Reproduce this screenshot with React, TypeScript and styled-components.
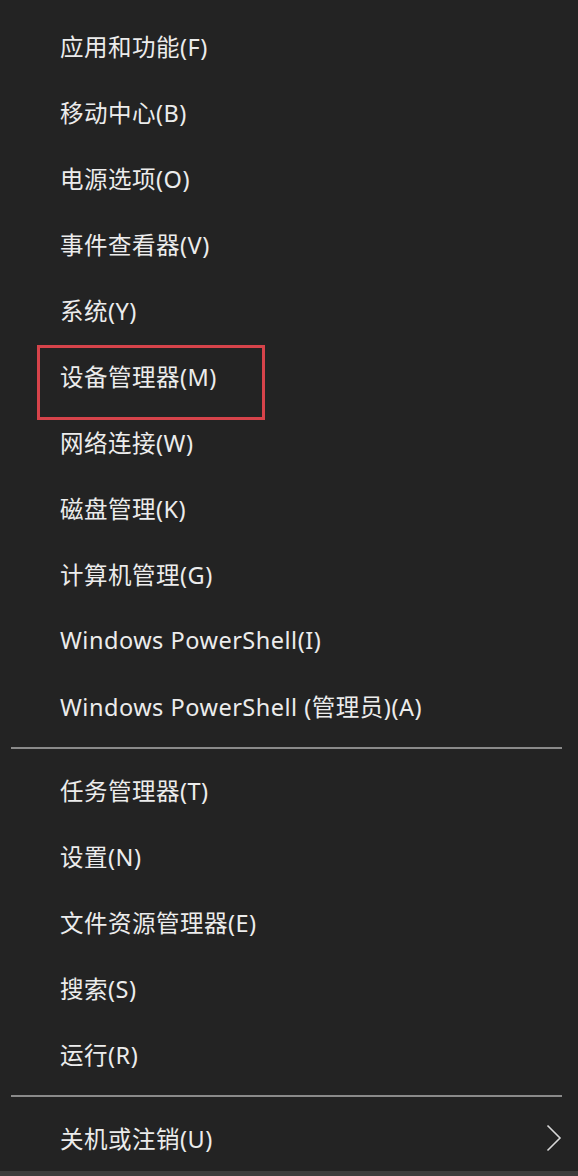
import styled, { createGlobalStyle } from "styled-components";

const GlobalStyle = createGlobalStyle`
  html, body {
    margin: 0;
    padding: 0;
    background: #232323;
  }
`;

const groups = [
  [
    "应用和功能(F)",
    "移动中心(B)",
    "电源选项(O)",
    "事件查看器(V)",
    "系统(Y)",
    "设备管理器(M)",
    "网络连接(W)",
    "磁盘管理(K)",
    "计算机管理(G)",
    "Windows PowerShell(I)",
    "Windows PowerShell (管理员)(A)",
  ],
  ["任务管理器(T)", "设置(N)", "文件资源管理器(E)", "搜索(S)", "运行(R)"],
];

export default function App() {
  return (
    <>
      <GlobalStyle />
      <Menu>
        <Group>
          {groups[0].map((label) => (
            <Item key={label} $marked={label.startsWith("设备管理器")}>
              {label}
            </Item>
          ))}
        </Group>
        <Divider />
        <Group>
          {groups[1].map((label) => (
            <Item key={label}>{label}</Item>
          ))}
        </Group>
        <Divider />
        <Item>
          关机或注销(U)
          <Chevron viewBox="0 0 16 28" aria-hidden>
            <path d="M1.5 1.5 L14 14 L1.5 26.5" />
          </Chevron>
        </Item>
        <BottomEdge />
      </Menu>
    </>
  );
}

const Menu = styled.div`
  width: 578px;
  height: 1176px;
  box-sizing: border-box;
  padding-top: 13px;
  display: flex;
  flex-direction: column;
  background: #232323;
  font-family: "Noto Sans", "Noto Sans CJK SC", sans-serif;
  color: #ececec;
`;

const Group = styled.div`
  display: flex;
  flex-direction: column;
`;

const Item = styled.div<{ $marked?: boolean }>`
  position: relative;
  height: 66px;
  display: flex;
  align-items: center;
  justify-content: space-between;
  padding: 0 16px 0 60px;
  font-size: 23.5px;
  letter-spacing: 0.5px;

  &::after {
    content: "";
    display: ${(p) => (p.$marked ? "block" : "none")};
    position: absolute;
    left: 37px;
    top: 2px;
    width: 228px;
    height: 75px;
    box-sizing: border-box;
    border: 3.5px solid #d6434a;
  }
`;

const Divider = styled.div`
  margin: 8px 16px 8px 11px;
  height: 2px;
  background: #8a8a8a;
`;

const Chevron = styled.svg`
  width: 16px;
  height: 28px;
  fill: none;
  stroke: #d8d8d8;
  stroke-width: 1.6;
`;

const BottomEdge = styled.div`
  margin-top: auto;
  height: 5px;
  background: #3c3c3c;
`;
